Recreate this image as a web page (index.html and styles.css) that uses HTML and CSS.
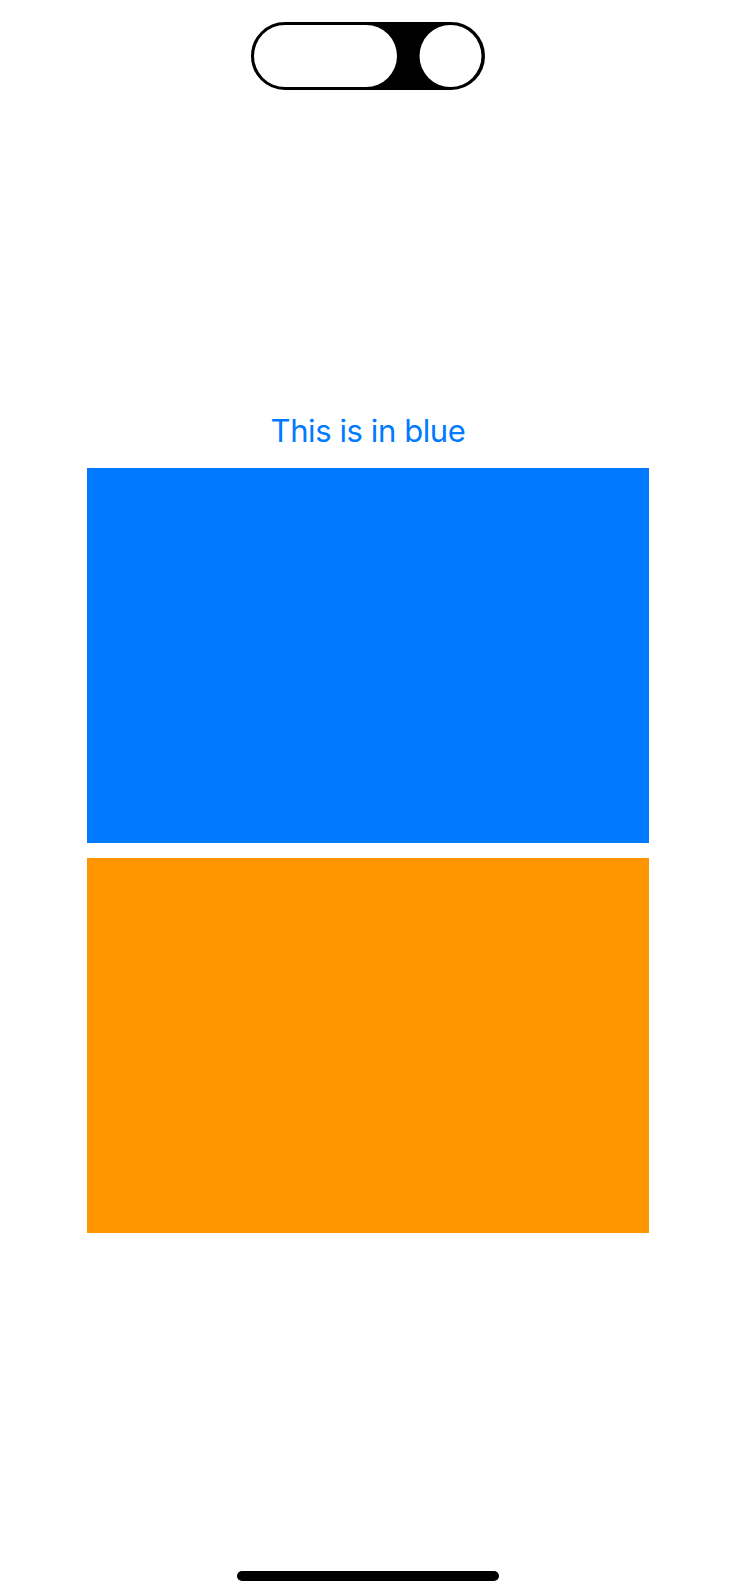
FILE: index.html
```html
<!DOCTYPE html>
<html>
<head>
    <title>Colors</title>
    <link rel="stylesheet" href="styles.css">
</head>
<body>
    <div class="screen">
        <!-- 灵动岛 -->
        <div class="island">
            <svg width="234" height="68" viewBox="0 0 234 68">
                <rect x="1" y="1" width="232" height="66" rx="33" fill="#000" stroke="#000" stroke-width="2"/>
                <rect x="3" y="3" width="143" height="62" rx="31" fill="#fff"/>
                <circle cx="199.5" cy="34" r="31" fill="#fff"/>
            </svg>
        </div>

        <div class="content">
            <div class="title">This is in blue</div>
            <div class="box blue"></div>
            <div class="box orange"></div>
        </div>

        <div class="home-bar"></div>
    </div>
</body>
</html>
```

FILE: styles.css
```css
body {
    margin: 0;
    background: #fff;
    font-family: Inter, "Noto Sans", sans-serif;
}
.screen {
    height: 1596px;
    display: flex;
    flex-direction: column;
    align-items: center;
    background: #fff;
}
.island {
    margin-top: 22px;
    height: 68px;
}
.island svg {
    display: block;
}
.content {
    margin-top: 322px;
    display: flex;
    flex-direction: column;
    align-items: center;
    gap: 15px;
}
.title {
    font-size: 31px;
    line-height: 38px;
    letter-spacing: -0.4px;
    color: #007aff;
    margin-bottom: 3px;
}
.box {
    width: 562px;
    height: 375px;
}
.blue {
    background: #007aff;
}
.orange {
    background: #ff9500;
}
.home-bar {
    margin-top: auto;
    margin-bottom: 15px;
    width: 262px;
    height: 10px;
    border-radius: 5px;
    background: #000;
}
```
